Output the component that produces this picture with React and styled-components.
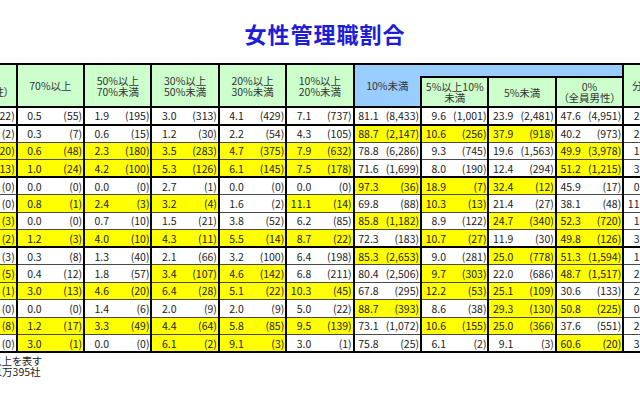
import React from 'react';
import styled, { createGlobalStyle } from 'styled-components';

const GlobalStyle = createGlobalStyle`
  html, body {
    margin: 0;
    padding: 0;
    background: #fff;
  }

  body {
    width: 640px;
    height: 400px;
    overflow: hidden;
    font-family: 'Noto Sans CJK JP', 'Noto Sans', sans-serif;
    font-feature-settings: 'palt';
    color: #222;
  }
`;

const COL_WIDTH = 67.4;

const Page = styled.div`
  width: 640px;
  height: 400px;
  overflow: hidden;
`;

const Title = styled.h1`
  margin: 0;
  padding: 20px 0 0 10px;
  height: 43px;
  text-align: center;
  font-size: 22px;
  line-height: 26px;
  font-weight: bold;
  letter-spacing: 1px;
  color: #1d1dd8;
`;

const Sheet = styled.div`
  margin-left: -51.7px;
  width: ${COL_WIDTH * 11 + 4}px;
`;

const Table = styled.table`
  border-collapse: collapse;
  table-layout: fixed;
  width: ${COL_WIDTH * 11}px;
  border: 2px solid #000;
`;

const Col = styled.col`
  width: ${COL_WIDTH}px;
`;

const HeadRow = styled.tr`
  height: ${({ $h }) => $h}px;
`;

const HeadCell = styled.th`
  padding: 0;
  border: 2px solid #000;
  border-right: ${({ $open }) => ($open ? 'none' : '2px solid #000')};
  border-left: ${({ $band }) => ($band ? 'none' : '2px solid #000')};
  background: ${({ $tone }) => ($tone === 'blue' ? '#99ccff' : '#ccffcc')};
  font-weight: normal;
  font-size: 10.5px;
  line-height: 11px;
  color: #333;
  text-align: center;
  vertical-align: middle;
  white-space: pre-line;
`;

const DataRow = styled.tr`
  height: 17.5px;
`;

const DataCell = styled.td`
  padding: 0;
  border-left: 2px solid #000;
  border-right: 2px solid #000;
  border-top: ${({ $split }) => ($split ? '2px solid #000' : '1px solid #4a4a4a')};
  border-bottom: 1px solid #4a4a4a;
  background: ${({ $hi }) => ($hi ? '#ffff00' : '#fff')};
  font-size: 10.5px;
  line-height: 12px;
  color: #222;
`;

const Figures = styled.div`
  display: flex;
  align-items: center;
  padding-top: 1px;
  white-space: nowrap;
`;

const Pct = styled.span`
  width: 24px;
  text-align: right;
`;

const Count = styled.span`
  flex: 1;
  text-align: right;
  padding-right: 1px;
`;

const Notes = styled.div`
  margin-left: -41.3px;
  padding-top: 2px;
  font-size: 10.5px;
  line-height: 11px;
  color: #222;
`;

const heads = [
  '100%\n（全員女性）',
  '70%以上',
  '50%以上\n70%未満',
  '30%以上\n50%未満',
  '20%以上\n30%未満',
  '10%以上\n20%未満',
];

const subHeads = ['5%以上10%\n未満', '5%未満', '0%\n（全員男性）'];

// "*" marks a cell at or above the overall average (yellow)
const rows = [
  ['0.2 22', '0.5 55', '1.9 195', '3.0 313', '4.1 429', '7.1 737', '81.1 8,433', '9.6 1,001', '23.9 2,481', '47.6 4,951', '2.0 211'],
  ['0.1 2', '0.3 7', '0.6 15', '1.2 30', '2.2 54', '4.3 105', '*88.7 2,147', '*10.6 256', '*37.9 918', '40.2 973', '2.3 56'],
  ['*0.3 20', '*0.6 48', '*2.3 180', '*3.5 283', '*4.7 375', '*7.9 632', '78.8 6,286', '9.3 745', '19.6 1,563', '*49.9 3,978', '1.8 143'],
  ['*0.5 13', '*1.0 24', '*4.2 100', '*5.3 126', '*6.1 145', '*7.5 178', '71.6 1,699', '8.0 190', '12.4 294', '*51.2 1,215', '3.1 74'],
  ['0.0 0', '0.0 0', '0.0 0', '2.7 1', '0.0 0', '0.0 0', '*97.3 36', '*18.9 7', '*32.4 12', '45.9 17', '0.0 0'],
  ['0.0 0', '*0.8 1', '*2.4 3', '*3.2 4', '1.6 2', '*11.1 14', '69.8 88', '*10.3 13', '21.4 27', '38.1 48', '11.1 14'],
  ['*0.2 3', '0.0 0', '0.7 10', '1.5 21', '3.8 52', '6.2 85', '*85.8 1,182', '8.9 122', '*24.7 340', '*52.3 720', '1.7 24'],
  ['*0.8 2', '*1.2 3', '*4.0 10', '*4.3 11', '*5.5 14', '*8.7 22', '72.3 183', '*10.7 27', '11.9 30', '*49.8 126', '3.2 8'],
  ['0.1 3', '0.3 8', '1.3 40', '2.1 66', '3.2 100', '6.4 198', '*85.3 2,653', '9.0 281', '*25.0 778', '*51.3 1,594', '1.9 59'],
  ['*0.2 5', '0.4 12', '1.8 57', '*3.4 107', '*4.6 142', '6.8 211', '80.4 2,506', '*9.7 303', '22.0 686', '*48.7 1,517', '2.4 75'],
  ['*0.2 1', '*3.0 13', '*4.6 20', '*6.4 28', '*5.1 22', '*10.3 45', '67.8 295', '*12.2 53', '*25.1 109', '30.6 133', '2.3 10'],
  ['0.0 0', '0.0 0', '1.4 6', '2.0 9', '2.0 9', '5.0 22', '*88.7 393', '8.6 38', '*29.3 130', '*50.8 225', '0.9 4'],
  ['*0.5 8', '*1.2 17', '*3.3 49', '*4.4 64', '*5.8 85', '*9.5 139', '73.1 1,072', '*10.6 155', '*25.0 366', '37.6 551', '2.2 32'],
  ['0.0 0', '*3.0 1', '0.0 0', '*6.1 2', '*9.1 3', '3.0 1', '75.8 25', '6.1 2', '9.1 3', '*60.6 20', '3.0 1'],
];

// rows that open a new group get a heavy rule above them
const groupStarts = [1, 4, 8];

const parseCell = raw => {
  const hi = raw.startsWith('*');
  const [pct, count] = raw.replace('*', '').split(' ');
  return { hi, pct, count };
};

const App = () => (
  <Page>
    <GlobalStyle />
    <Title>女性管理職割合</Title>
    <Sheet>
      <Table>
        <colgroup>
          {Array.from({ length: 11 }, (_, i) => (
            <Col key={i} />
          ))}
        </colgroup>
        <thead>
          <HeadRow $h={13}>
            {heads.map(h => (
              <HeadCell key={h} rowSpan={2}>
                {h}
              </HeadCell>
            ))}
            <HeadCell rowSpan={2} $tone="blue" $open>
              10%未満
            </HeadCell>
            <HeadCell colSpan={3} $tone="blue" $band />
            <HeadCell rowSpan={2}>分からない</HeadCell>
          </HeadRow>
          <HeadRow $h={30}>
            {subHeads.map(h => (
              <HeadCell key={h}>{h}</HeadCell>
            ))}
          </HeadRow>
        </thead>
        <tbody>
          {rows.map((row, r) => (
            <DataRow key={r}>
              {row.map((raw, c) => {
                const { hi, pct, count } = parseCell(raw);
                return (
                  <DataCell key={c} $hi={hi} $split={groupStarts.includes(r)}>
                    <Figures>
                      <Pct>{pct}</Pct>
                      <Count>({count})</Count>
                    </Figures>
                  </DataCell>
                );
              })}
            </DataRow>
          ))}
        </tbody>
      </Table>
      <Notes>
        <div>※黄色は全体平均以上を表す</div>
        <div>※集計対象企業数：1万395社</div>
      </Notes>
    </Sheet>
  </Page>
);

export default App;
